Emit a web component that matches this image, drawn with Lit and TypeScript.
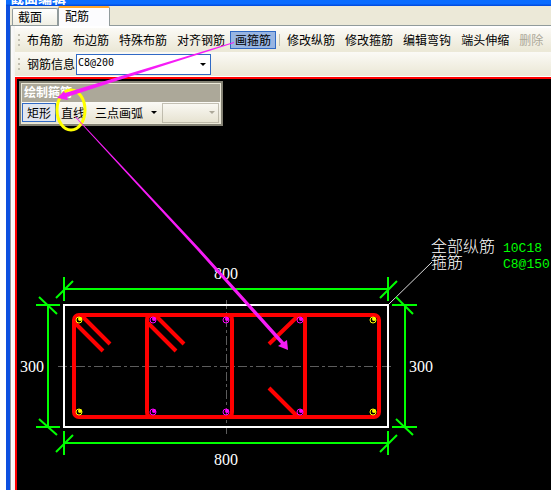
import { LitElement, html, svg, css } from "lit";
import { customElement } from "lit/decorators.js";

const FIRST_TOOLS = ["布角筋", "布边筋", "特殊布筋", "对齐钢筋", "画箍筋"];
const EDIT_TOOLS = ["修改纵筋", "修改箍筋", "编辑弯钩", "端头伸缩", "删除"];

@customElement("section-drawing")
class SectionDrawing extends LitElement {
  static styles = css`
    :host { display: block; flex: 1; min-width: 0; overflow: hidden; }
    svg { display: block; width: 100%; height: 100%; }
    .outline { fill: none; stroke: #fff; stroke-width: 2; }
    .dim { fill: none; stroke: #0f0; stroke-width: 2; }
    .stirrup { fill: none; stroke: #f00; stroke-width: 4; }
    .axis { fill: none; stroke: #5c5c5c; stroke-dasharray: 9 3 3 3; shape-rendering: crispEdges; }
    .leader { fill: none; stroke: #ddd; }
    .corner { stroke: #ff0; fill: #ff0; }
    .middle { stroke: #f0f; fill: #f0f; }
    .ring { fill: none; }
    .dot { stroke: none; }
    .number { font: 16px "Liberation Serif", serif; fill: #fff; text-anchor: middle; }
    .label { font: 16px "Noto Sans CJK SC", sans-serif; font-weight: 300; fill: #fff; }
    .value { font: 13px "Liberation Mono", monospace; fill: #0f0; }
  `;

  private bar(x: number, y: number, kind: string) {
    return svg`<g class=${kind}>
      <circle class="ring" cx=${x} cy=${y} r="3"></circle>
      <circle class="dot" cx=${x + 1} cy=${y - 1} r="2"></circle>
    </g>`;
  }

  render() {
    return html`
      <svg role="img" aria-label="800 × 300">
        <g transform="translate(-17 -79)">
          <path class="axis" d="M58 366.5H391M226.5 300V434"></path>
          <path class="leader" d="M389 304L432 262"></path>
          <path class="dim" d="M64 289H388M64 277V301M388 277V301M56 298L73 281M380 298L397 281
            M64 443H388M64 431V455M388 431V455M56 452L73 435M380 452L397 435
            M48 305V427M36 305H60M36 427H60M39 297L57 314M39 419L57 435
            M405 305V427M392 305H417M392 427H417M396 297L413 314M396 419L413 435"></path>
          <rect class="outline" x="64" y="305" width="324" height="122"></rect>
          <rect class="stirrup" x="74" y="315" width="305" height="102" rx="5"></rect>
          <path class="stirrup" d="M152 315Q147 315 147 320V412Q147 417 152 417
            M227 315Q232 315 232 320V412Q232 417 227 417
            M305 315V417
            M75 323L103 351M82 316L110 344
            M148 323L176 351M156 316L184 344
            M299 315L269 344M269 388L298 417"></path>
          ${[79, 373].map((x) => [this.bar(x, 320, "corner"), this.bar(x, 412, "corner")])}
          ${[153, 226, 300].map((x) => [this.bar(x, 320, "middle"), this.bar(x, 412, "middle")])}
          <text class="number" x="226" y="279">800</text>
          <text class="number" x="226" y="465">800</text>
          <text class="number" x="32" y="372">300</text>
          <text class="number" x="421" y="372">300</text>
          <text class="label" x="431" y="252">全部纵筋</text>
          <text class="label" x="431" y="268">箍筋</text>
          <text class="value" x="503" y="252">10C18</text>
          <text class="value" x="503" y="268">C8@150</text>
        </g>
      </svg>`;
  }
}

@customElement("draw-palette")
class DrawPalette extends LitElement {
  static styles = css`
    :host {
      display: block; box-sizing: border-box; width: 204px; border: 2px solid #848274;
      font: 12px/16px "Noto Sans CJK SC", sans-serif; color: #000;
    }
    .frame { border: 1px solid #ece9d8; }
    .title { background: #aca899; color: #fff; font-weight: 700; padding: 0 2px 2px; }
    .tools { display: flex; align-items: center; height: 21px; background: linear-gradient(#fbfaf6, #e6e2d0); }
    button {
      font: inherit; color: inherit; background: none; border: 1px solid transparent;
      box-sizing: border-box; height: 19px; padding: 0 4px; margin: 0; white-space: nowrap;
      display: flex; align-items: center;
    }
    .active { border-color: #316ac5; background: #e1e6ef; }
    .menu { gap: 8px; }
    .arrow { border: 3px solid transparent; border-top-color: currentColor; border-bottom: 0; }
    .combo { display: grid; align-items: center; flex: 1; height: 20px; margin-right: 1px; color: #aca899; }
    .combo > * { grid-area: 1 / 1; }
    .combo .arrow { justify-self: end; margin-right: 4px; pointer-events: none; }
    select { appearance: none; width: 100%; height: 20px; border: 1px solid #aca899; border-radius: 0; background: none; margin: 0; }
  `;

  render() {
    return html`<div class="frame">
      <div class="title">绘制箍筋</div>
      <div class="tools">
        <button class="active">矩形</button>
        <button>直线</button>
        <button class="menu">三点画弧<span class="arrow"></span></button>
        <span class="combo"><select disabled aria-label="三点画弧"></select><span class="arrow"></span></span>
      </div>
    </div>`;
  }
}

@customElement("app-root")
class AppRoot extends LitElement {
  static styles = css`
    :host {
      display: flex; flex-direction: column; position: relative; box-sizing: border-box;
      min-height: 100vh; overflow: hidden; padding-left: 6px; background: #fff;
      font: 12px/16px "Noto Sans CJK SC", sans-serif; color: #000;
    }
    .titlebar {
      display: flex; align-items: flex-end; height: 6px; overflow: hidden; padding-left: 4px;
      background: linear-gradient(#0a6cff 60%, #0046d8); color: #fff;
      font-size: 14px; line-height: 18px; font-weight: 700;
    }
    .body {
      flex: 1; display: flex; flex-direction: column; border-left: 4px solid #0d50e0; background: #ece9d8;
    }
    .tabs { display: flex; align-items: flex-end; height: 19px; padding-left: 2px; border-bottom: 1px solid #919b9c; }
    .tab {
      font: inherit; color: inherit; box-sizing: border-box; height: 17px; width: 46px; padding: 0 5px; margin: 0;
      border: 1px solid #919b9c; border-bottom: 0; border-radius: 2px 2px 0 0;
      background: linear-gradient(#fff, #f0efe4); text-align: left; white-space: nowrap;
    }
    .current { width: 52px; height: 20px; margin-bottom: -1px; padding: 0 6px 2px; border-top: 2px solid #ffa62b; background: #fcfcfe; }
    .page { flex: 1; display: flex; flex-direction: column; border-left: 1px solid #919b9c; padding-left: 4px; background: linear-gradient(90deg, #fcfcfe, #f4f3ee 4px); }
    .bars { background: #ece9d8; border-top: 2px solid #fff; border-bottom: 1px solid #fff; }
    .bar { display: flex; align-items: center; height: 24px; padding-left: 3px; background: linear-gradient(#fbfaf6, #ece9d8 90%); white-space: nowrap; overflow: hidden; }
    .grip { width: 2px; height: 12px; margin-right: 2px; flex: none; background: repeating-linear-gradient(#c1beb0 0 2px, transparent 2px 5px); }
    .tool { font: inherit; color: inherit; background: none; border: 1px solid transparent; box-sizing: border-box; height: 18px; margin: 0; padding: 0 4px; flex: none; line-height: 16px; }
    .tool:disabled { color: #aca899; }
    .pressed { border-color: #316ac5; background: #98b5e2; }
    .split { width: 1px; height: 12px; margin: 0 2px 0 3px; background: #c5c2b2; flex: none; }
    .field { padding-left: 5px; margin-right: 1px; }
    .combo { display: grid; align-items: center; width: 135px; }
    .combo > * { grid-area: 1 / 1; }
    .arrow { justify-self: end; margin-right: 5px; border: 3px solid transparent; border-top-color: #000; border-bottom: 0; pointer-events: none; }
    select {
      appearance: none; box-sizing: border-box; width: 100%; height: 21px; margin: 0; padding: 0 1px 3px;
      border: 1px solid #316ac5; border-radius: 0; background: #fff; color: #000;
      font: 10px "DejaVu Sans Mono", monospace;
    }
    .canvas { flex: 1; display: flex; position: relative; min-height: 400px; background: #000; border: solid #f00; border-width: 2px 0 0 2px; }
    draw-palette { position: absolute; left: 2px; top: 2px; }
    .notes { position: absolute; left: 0; top: 0; width: 100%; height: 100%; pointer-events: none; }
    .mark { fill: none; stroke: #ff0; stroke-width: 3; }
    .pointer { fill: #f61cf6; }
  `;

  render() {
    return html`
      <div class="titlebar">截面编辑</div>
      <div class="body">
        <div class="tabs" role="tablist">
          <button class="tab" role="tab" aria-selected="false">截面</button>
          <button class="tab current" role="tab" aria-selected="true">配筋</button>
        </div>
        <div class="page">
          <div class="bars">
            <div class="bar">
              <span class="grip"></span>
              ${FIRST_TOOLS.map((t) => html`<button class="tool ${t === "画箍筋" ? "pressed" : ""}">${t}</button>`)}
              <span class="split"></span>
              ${EDIT_TOOLS.map((t) => html`<button class="tool" ?disabled=${t === "删除"}>${t}</button>`)}
            </div>
            <div class="bar">
              <span class="grip"></span>
              <label class="field" for="rebar">钢筋信息</label>
              <span class="combo">
                <select id="rebar"><option>C8@200</option></select>
                <span class="arrow"></span>
              </span>
            </div>
          </div>
          <div class="canvas">
            <section-drawing></section-drawing>
            <draw-palette></draw-palette>
          </div>
        </div>
      </div>
      <svg class="notes" aria-hidden="true">
        <ellipse class="mark" cx="71" cy="110" rx="14" ry="20"></ellipse>
        <path class="pointer" d="M234 42L65 93L64 91L57 98L68 100L67 97L150 70L234 43Z"></path>
        <path class="pointer" d="M75 117L76 117L200 249L284 342L287 340L288 350L278 346L281 344L198 251Z"></path>
      </svg>`;
  }
}
